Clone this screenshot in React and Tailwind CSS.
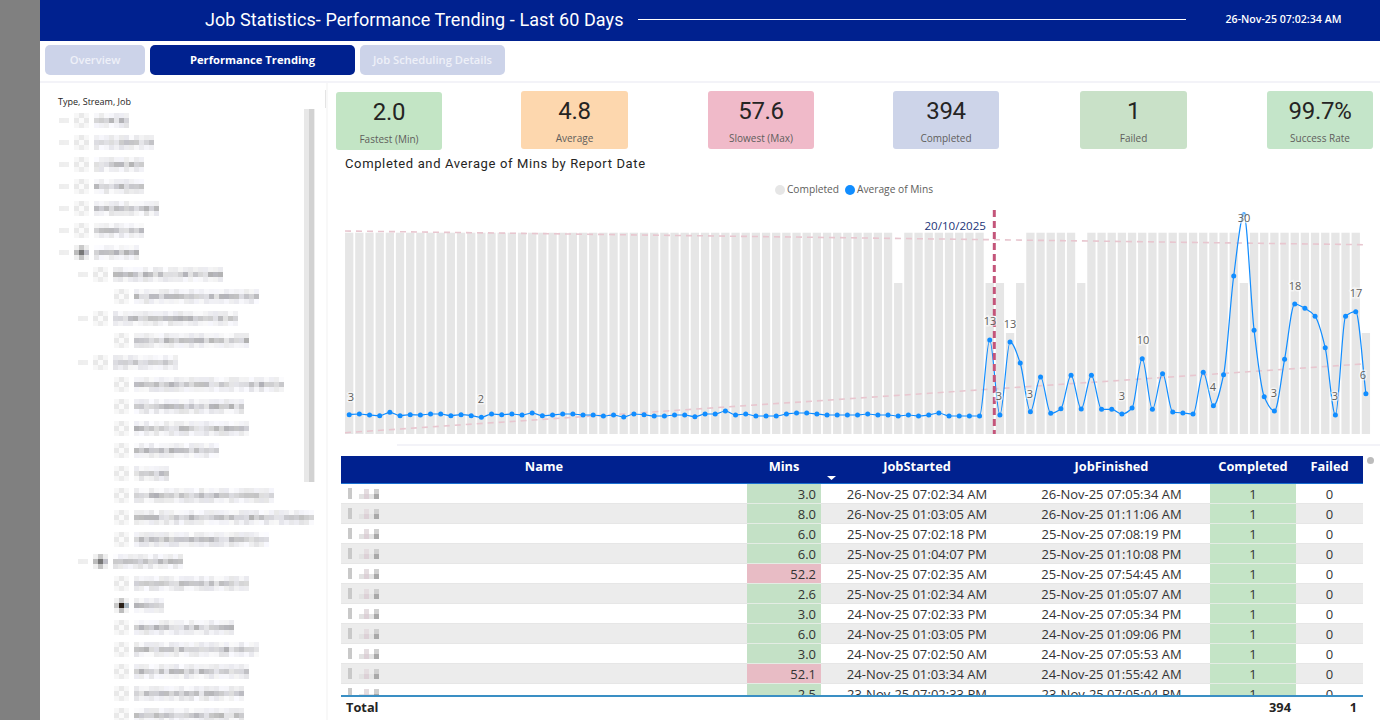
import React from 'react';

const NAVY = 'bg-[#00218f]';

// y of each line point, read from the chart (page px)
const lineA = [584,582,585,587,577,587,584,585,582,582,587,584,587,592,582,584,582,585,579,587,585,582,582,585,585,588,585,591,582,584,588,588,585].map(z => 220 + z / 3);
const lineB = [645,650,642,642,633,645,642,648,648,648,642,639,639,642,645,645,645,645,642,645,645,648,645,648,645,639,648,648,648,648,420,645,426].map(z => 200 + z / 3);
const lineC = [489,635,531,640,626,526,627,526,628,628,642,624,476,628,521,636,639,642,517,617,524,228,44,391,590,633,478,312,325,349,443,645,349,335,581].map(z => 200 + z / 3);
const ys = [...lineA, ...lineB, ...lineC];
const STEP = 10.167;
const points = ys.map((y, i) => [349.2 + STEP * i, y]);

// monotone smooth line through the points
const smoothPath = pts => {
  const sec = pts.slice(1).map((p, i) => (p[1] - pts[i][1]) / (p[0] - pts[i][0]));
  const slope = pts.map((_, i) => {
    if (i === 0) return sec[0];
    if (i === pts.length - 1) return sec[i - 1];
    const a = sec[i - 1];
    const b = sec[i];
    return a * b <= 0 ? 0 : (2 * a * b) / (a + b);
  });
  let d = `M${pts[0][0]} ${pts[0][1]}`;
  for (let i = 0; i < pts.length - 1; i++) {
    const dx = (pts[i + 1][0] - pts[i][0]) / 3;
    const c1 = [pts[i][0] + dx, pts[i][1] + slope[i] * dx];
    const c2 = [pts[i + 1][0] - dx, pts[i + 1][1] - slope[i + 1] * dx];
    d += ` C${c1[0].toFixed(1)} ${c1[1].toFixed(1)} ${c2[0].toFixed(1)} ${c2[1].toFixed(1)} ${pts[i + 1][0].toFixed(1)} ${pts[i + 1][1].toFixed(1)}`;
  }
  return d;
};

const barTop = { 54: 283, 63: 283, 64: 283, 65: 333, 66: 283, 72: 283, 88: 283, 100: 333 };

const labels = [
  ['3', 351, 401], ['2', 481, 403], ['13', 990, 325], ['13', 1010, 328], ['3', 999, 400],
  ['3', 1030, 398], ['3', 1122, 400], ['10', 1143, 344], ['4', 1213, 391], ['30', 1244, 222],
  ['3', 1274, 397], ['18', 1295, 290], ['3', 1335, 400], ['17', 1356, 297], ['6', 1363, 379],
];

const cards = [
  { value: '2.0', label: 'Fastest (Min)', cls: 'bg-[#c3e5c5] w-[106px] mt-px' },
  { value: '4.8', label: 'Average', cls: 'bg-[#fdd7ae] w-[107px] ml-[79px]' },
  { value: '57.6', label: 'Slowest (Max)', cls: 'bg-[#f0bac9] w-[106px] ml-[80px]' },
  { value: '394', label: 'Completed', cls: 'bg-[#cdd4e9] w-[106px] ml-[79px]' },
  { value: '1', label: 'Failed', cls: 'bg-[#c9e1c8] w-[107px] ml-[81px]' },
  { value: '99.7%', label: 'Success Rate', cls: 'bg-[#c4e5c9] w-[106px] ml-[80px]' },
];

const rows = [
  ['3.0', '26-Nov-25 07:02:34 AM', '26-Nov-25 07:05:34 AM'],
  ['8.0', '26-Nov-25 01:03:05 AM', '26-Nov-25 01:11:06 AM'],
  ['6.0', '25-Nov-25 07:02:18 PM', '25-Nov-25 07:08:19 PM'],
  ['6.0', '25-Nov-25 01:04:07 PM', '25-Nov-25 01:10:08 PM'],
  ['52.2', '25-Nov-25 07:02:35 AM', '25-Nov-25 07:54:45 AM'],
  ['2.6', '25-Nov-25 01:02:34 AM', '25-Nov-25 01:05:07 AM'],
  ['3.0', '24-Nov-25 07:02:33 PM', '24-Nov-25 07:05:34 PM'],
  ['6.0', '24-Nov-25 01:03:05 PM', '24-Nov-25 01:09:06 PM'],
  ['3.0', '24-Nov-25 07:02:50 AM', '24-Nov-25 07:05:53 AM'],
  ['52.1', '24-Nov-25 01:03:34 AM', '24-Nov-25 01:55:42 AM'],
  ['2.5', '23-Nov-25 07:02:33 PM', '23-Nov-25 07:05:04 PM'],
];

// slicer tree: level, end x of the blurred text, icon tone
const tree = [
  [0, 128], [0, 154], [0, 144], [0, 144], [0, 159], [0, 144], [0, 139, 'mid'],
  [1, 224], [2, 259], [1, 239], [2, 249], [1, 178],
  [2, 284], [2, 244], [2, 249], [2, 219], [2, 169], [2, 273], [2, 314], [2, 268],
  [1, 183, 'mid'], [2, 249], [2, 163, 'dark'], [2, 234], [2, 259], [2, 249], [2, 244], [2, 244],
];

let seed = 17;
const rand = () => {
  seed = (seed * 1103515245 + 12345) & 0x7fffffff;
  return seed / 0x7fffffff;
};
const gray = (lo, hi) => {
  const v = Math.round(lo + rand() * (hi - lo));
  return `rgb(${v},${v},${v + Math.round(rand() * 6)})`;
};

const Cell = ({ color }) => <div className="w-[5px] h-[5px] shrink-0" style={{ background: color }} />;

// blurred label, three rows of square blocks
const BlurText = ({ width }) => {
  const n = Math.round(width / 5);
  const band = (lo, hi) => Array.from({ length: n }, () => gray(lo, hi));
  const lines = [band(232, 252), band(176, 230), band(226, 250)];
  return (
    <div className="flex flex-col">
      {lines.map((line, r) => (
        <div key={r} className="flex">
          {line.map((c, i) => <Cell key={i} color={c} />)}
        </div>
      ))}
    </div>
  );
};

const iconTones = {
  light: ['#f7f7f7', '#e9e9e9', '#f7f7f7', '#e9e9e9', '#fbfbfb', '#e9e9e9', '#f7f7f7', '#ececec', '#f7f7f7'],
  mid: ['#f0f0f0', '#c9c9c9', '#eeeeee', '#bcbcbc', '#777777', '#c0c0c8', '#f0f0f0', '#c4c4c4', '#f0f0f0'],
  dark: ['#f2f2f2', '#c9c9c9', '#f2f2f2', '#c8c8c8', '#2a2018', '#a9b6c0', '#f2f2f2', '#bdbdbd', '#f2f2f2'],
};

const BlurIcon = ({ tone = 'light' }) => (
  <div className="grid grid-cols-[5px_5px_5px] shrink-0">
    {iconTones[tone].map((c, i) => <Cell key={i} color={c} />)}
  </div>
);

const TreeRow = ({ level, end, tone }) => {
  const indent = level === 0 ? 'pl-[19px]' : level === 1 ? 'pl-[38px]' : 'pl-[74px]';
  const textStart = level === 0 ? 94 : level === 1 ? 114 : 134;
  return (
    <div className={`h-[22.07px] flex items-center ${indent}`}>
      {level < 2 && (
        <div className="flex w-[15px]">
          <Cell color="#eeeeee" />
          <Cell color="#efefef" />
        </div>
      )}
      <BlurIcon tone={tone} />
      <div className="ml-[5px]">
        <BlurText width={end - textStart} />
      </div>
    </div>
  );
};

const Sidebar = () => (
  <aside className="w-[288px] shrink-0 relative overflow-hidden border-r-2 border-[#f8f8f8]">
    <div className="pl-[18px] pt-[13px] h-[26px] text-[9px] leading-[12px] text-[#252423] font-['Open_Sans',sans-serif]">Type, Stream, Job</div>
    <div className="flex flex-col blur-[0.5px]">
      {tree.map(([level, end, tone], i) => <TreeRow key={i} level={level} end={end} tone={tone} />)}
    </div>
    {/* scrollbar lies over the list */}
    <div className="absolute left-[264px] top-[26px] h-[373px] w-[11px] flex">
      <div className="w-[5px] bg-[#e8e8e8]" />
      <div className="w-[5px] bg-[#d2d2d2]" />
      <div className="w-px bg-[#eeeeee]" />
    </div>
    <div className="absolute right-0 top-[7px] h-[18px] w-px bg-[#e4e4e4]" />
  </aside>
);

const Card = ({ value, label, cls }) => (
  <div className={`h-[58px] rounded-[3px] flex flex-col items-center ${cls}`}>
    <div className="mt-[4px] h-[32px] text-[24px] leading-[32px] text-[#252423] tracking-[-0.3px] font-['Roboto',sans-serif]">{value}</div>
    <div className="mt-[4px] text-[10px] leading-[14px] text-[#605e5c] font-['Open_Sans',sans-serif]">{label}</div>
  </div>
);

const Chart = () => (
  <svg viewBox="328 205 1052 235" width="1052" height="235" className="block">
    {points.map(([x], i) => {
      const top = barTop[i] || 232.7;
      return <rect key={i} x={x - 4.15} y={top} width="8.3" height={434 - top} fill="#e6e6e6" />;
    })}
    <line x1="345" y1="231" x2="1363" y2="244.7" stroke="#e8c6cf" strokeWidth="1.6" strokeDasharray="6 5" />
    <line x1="345" y1="432.7" x2="1363" y2="364" stroke="#e8c6cf" strokeWidth="1.6" strokeDasharray="6 5" />
    <path d={smoothPath(points)} fill="none" stroke="#118dff" strokeWidth="1.2" />
    {points.map(([x, y], i) => <circle key={i} cx={x} cy={y} r="2.5" fill="#118dff" />)}
    <line x1="994.3" y1="210" x2="994.3" y2="434" stroke="#c4557a" strokeWidth="3" strokeDasharray="7 4" />
    <text x="986" y="230" textAnchor="end" fontSize="11.6" fill="#1c3578" fontFamily="'Open Sans', sans-serif">20/10/2025</text>
    {labels.map(([t, x, y], i) => (
      <text key={i} x={x} y={y} textAnchor="middle" fontSize="11" fill="#605e5c" stroke="#ffffff" strokeOpacity="0.55" strokeWidth="3" paintOrder="stroke" fontFamily="'Open Sans', sans-serif">{t}</text>
    ))}
  </svg>
);

const NameBlur = () => (
  <div className="flex items-center pl-[7px] blur-[0.4px]">
    <div className="w-[4px] h-[11px] bg-[#c9c9c9]" />
    <div className="ml-[7px] flex flex-col">
      <div className="flex">
        <Cell color="transparent" /><Cell color="#e4dde0" /><Cell color="transparent" /><Cell color="#cfcfcf" />
      </div>
      <div className="flex">
        <Cell color="#e2e2e2" /><Cell color="#dcd0d6" /><Cell color="#e4e4e4" /><Cell color="#a9a9a9" />
      </div>
    </div>
  </div>
);

const COLS = 'grid grid-cols-[406px_74px_192px_197px_86px_67px]';

const JobTable = () => (
  <div className="relative ml-[13px] w-[1022px] font-['Open_Sans',sans-serif]">
    <div className={`${COLS} ${NAVY} h-[28px] border-b border-[#1a6fd0] text-white text-[12.8px] font-bold leading-[20px] text-center`}>
      <div>Name</div>
      <div>Mins</div>
      <div>JobStarted</div>
      <div>JobFinished</div>
      <div>Completed</div>
      <div>Failed</div>
    </div>
    {/* sort arrow sits on the header */}
    <svg className="absolute left-[486px] top-[20px]" width="9" height="4" viewBox="0 0 9 4">
      <path d="M0 0H9L4.5 4Z" fill="#ffffff" />
    </svg>
    <div className="h-[211px] overflow-hidden">
      {rows.map(([mins, start, finish], i) => (
        <div key={i} className={`${COLS} h-[20px] text-[13px] leading-[17px] text-[#333333] text-center ${i % 2 ? 'bg-[#ececec]' : 'bg-white'}`}>
          <div className="flex items-center border-b border-[#e6e6e6]"><NameBlur /></div>
          <div className={`pt-[2px] text-right pr-[5px] border-b border-[#e4ece4] ${parseFloat(mins) > 50 ? 'bg-[#e8bcc5]' : 'bg-[#c4e1c6]'}`}>{mins}</div>
          <div className="pt-[2px] border-b border-[#e6e6e6]">{start}</div>
          <div className="pt-[2px] border-b border-[#e6e6e6]">{finish}</div>
          <div className="pt-[2px] bg-[#c4e4c6] border-b border-[#e4ece4]">1</div>
          <div className="pt-[2px] border-b border-[#e6e6e6]">0</div>
        </div>
      ))}
    </div>
    <div className={`${COLS} border-t-2 border-[#3a8fc4] h-[25px] text-[12.8px] font-bold leading-[20px] text-[#252423]`}>
      <div className="pl-[5px]">Total</div>
      <div />
      <div />
      <div />
      <div className="text-right pr-[5px]">394</div>
      <div className="text-right pr-[6px]">1</div>
    </div>
    <div className="absolute left-[1026px] top-[1px] w-[7px] h-[7px] rounded-full bg-[#bcbcbc]" />
  </div>
);

const App = () => (
  <div className="h-screen w-full flex overflow-hidden bg-white">
    <div className="w-10 shrink-0 bg-[#808080]" />
    <div className="flex-1 min-w-0 flex flex-col">
      {/* HEADER */}
      <header className={`${NAVY} h-[41px] shrink-0 flex items-center pl-[165px] pb-[2px] text-white`}>
        <h1 className="text-[18px] font-normal tracking-[0.08px] font-['Roboto',sans-serif] whitespace-nowrap">Job Statistics- Performance Trending - Last 60 Days</h1>
        <div className="ml-[14px] w-[548px] h-px bg-white" />
        <div className="ml-[40px] text-[10.6px] font-semibold font-['Open_Sans',sans-serif] whitespace-nowrap">26-Nov-25 07:02:34 AM</div>
      </header>

      {/* TABS */}
      <nav className="h-[42px] shrink-0 pt-[4px] pl-[5px] flex gap-[5px] border-b-2 border-[#f3f3f8] text-[11.2px] font-['Open_Sans',sans-serif]">
        <div className="w-[100px] h-[30px] pt-px rounded-[5px] bg-[#ccd3e9] text-[#eef0f8] font-semibold flex items-center justify-center">Overview</div>
        <div className={`w-[205px] h-[30px] pt-px rounded-[5px] ${NAVY} text-white font-bold flex items-center justify-center`}>Performance Trending</div>
        <div className="w-[145px] h-[30px] pt-px rounded-[5px] bg-[#ccd3e9] text-[#eef0f8] font-semibold flex items-center justify-center">Job Scheduling Details</div>
      </nav>

      <div className="flex-1 min-h-0 flex">
        <Sidebar />
        <main className="flex-1 min-w-0">
          <div className="flex items-start pl-[8px] pt-[8px]">
            {cards.map(c => <Card key={c.label} {...c} />)}
          </div>
          <div className="pl-[17px] mt-[5px] h-[18px] text-[13px] leading-[18px] tracking-[0.63px] font-normal text-[#252423] font-['Roboto',sans-serif]">Completed and Average of Mins by Report Date</div>
          <div className="mt-[10px] h-[14px] flex items-center justify-center gap-[2px] text-[10.2px] text-[#605e5c] font-['Open_Sans',sans-serif]">
            <span className="w-[10px] h-[10px] rounded-full bg-[#e6e6e6]" />
            <span>Completed</span>
            <span className="ml-[4px] w-[10px] h-[10px] rounded-full bg-[#118dff]" />
            <span>Average of Mins</span>
          </div>
          <div className="mt-[8px]">
            <Chart />
          </div>
          <div className="ml-[69px] mt-[4px] h-[2px] bg-[#f3f3f8]" />
          <div className="mt-[10px]">
            <JobTable />
          </div>
        </main>
      </div>
    </div>
  </div>
);

export default App;
